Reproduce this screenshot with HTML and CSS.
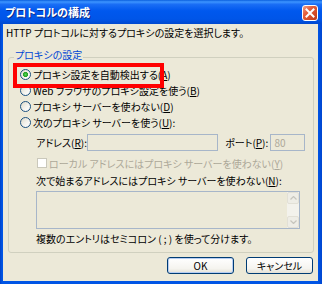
FILE: index.html
```html
<!DOCTYPE html>
<html lang="ja">
<head>
<meta charset="utf-8">
<title>プロトコルの構成</title>
<link rel="stylesheet" href="styles.css">
</head>
<body>
<div class="window">
  <div class="titlebar">
    <span class="title">プロトコルの構成</span>
    <span class="close"><svg width="10" height="10" viewBox="0 0 10 10"><path d="M1.5 1.5 L8.5 8.5 M8.5 1.5 L1.5 8.5" stroke="#fff" stroke-width="2" stroke-linecap="square"/></svg></span>
  </div>
  <div class="client">
    <p class="intro">HTTP プロトコルに対するプロキシの設定を選択します。</p>
    <fieldset class="group">
      <legend>プロキシの設定</legend>
      <div class="opt first"><span class="radio on"></span><span>プロキシ設定を自動検出する(<u>A</u>)</span></div>
      <div class="opt"><span class="radio"></span><span>Web ブラウザのプロキシ設定を使う(<u>B</u>)</span></div>
      <div class="opt"><span class="radio"></span><span>プロキシ サーバーを使わない(<u>D</u>)</span></div>
      <div class="opt"><span class="radio"></span><span>次のプロキシ サーバーを使う(<u>U</u>):</span></div>
      <div class="sub">
        <div class="addr">
          <span class="addr-label">アドレス(<u>R</u>):</span>
          <span class="field addr-input"></span>
          <span class="port-label">ポート(<u>P</u>):</span>
          <span class="field port">80</span>
        </div>
        <div class="chk"><span class="box"></span><span>ローカル アドレスにはプロキシ サーバーを使わない(<u>Y</u>)</span></div>
        <div class="lbl">次で始まるアドレスにはプロキシ サーバーを使わない(<u>N</u>):</div>
        <div class="area">
          <div class="sb">
            <span class="sbtn"><svg width="7" height="4" viewBox="0 0 7 4"><path d="M0.5 3.5 L3.5 0.5 L6.5 3.5" fill="none" stroke="#c6c5bd" stroke-width="1.2"/></svg></span>
            <span class="sbtn"><svg width="7" height="4" viewBox="0 0 7 4"><path d="M0.5 0.5 L3.5 3.5 L6.5 0.5" fill="none" stroke="#c6c5bd" stroke-width="1.2"/></svg></span>
          </div>
        </div>
        <div class="note">複数のエントリはセミコロン ( ; ) を使って分けます。</div>
      </div>
    </fieldset>
    <div class="buttons">
      <button class="btn ok">OK</button>
      <button class="btn">キャンセル</button>
    </div>
  </div>
  <div class="mark"></div>
</div>
</body>
</html>
```

FILE: styles.css
```css
* { box-sizing: border-box; }
html, body { margin: 0; padding: 0; }
body {
  width: 322px;
  height: 284px;
  overflow: hidden;
  font-family: "Noto Sans CJK JP", "Noto Sans", sans-serif;
  font-size: 10px;
  font-feature-settings: "palt";
  color: #000;
}
u { text-decoration: underline; text-underline-offset: 1px; }
.window {
  position: relative;
  width: 322px;
  height: 284px;
  display: flex;
  flex-direction: column;
  background: linear-gradient(to right, #0041c8 0, #0055e5 2px, #0055e5 318px, #0046d0 322px);
}
.titlebar {
  height: 24px;
  flex: none;
  display: flex;
  align-items: center;
  justify-content: space-between;
  padding: 0 4px 0 5px;
  background: linear-gradient(to bottom, #0a5fde 0%, #3d95ff 8%, #1a6ef5 18%, #0058ee 45%, #0055e8 80%, #0049cf 100%);
}
.title {
  color: #fff;
  font-weight: bold;
  font-size: 11px;
  line-height: 14px;
  text-shadow: 1px 1px 0 #0a2a8a;
}
.close {
  width: 16px;
  height: 16px;
  border: 1px solid #fff;
  border-radius: 3px;
  background: linear-gradient(135deg, #f0a08a 0%, #e4603e 35%, #d24a26 70%, #b83a1c 100%);
  display: flex;
  align-items: center;
  justify-content: center;
  margin-top: 2px;
}
.client {
  flex: 1;
  margin: 0 4px 3px 3px;
  background: #ece9d8;
  display: flex;
  flex-direction: column;
}
.intro {
  margin: 3px 0 0 3px;
  line-height: 12px;
  height: 12px;
  white-space: nowrap;
}
.group {
  margin: 10px 4px 0 5px;
  padding: 2px 8px 7px 11px;
  border: 1px solid #d0d0bf;
  border-radius: 3px;
  min-width: 0;
}
.group legend {
  padding: 0 1px 4px;
  margin-left: -6px;
  line-height: 12px;
  color: #0046d5;
}
.opt {
  display: flex;
  align-items: center;
  height: 16px;
  white-space: nowrap;
}
.opt.first { height: 15px; }
.radio {
  flex: none;
  width: 11px;
  height: 11px;
  margin-right: 2px;
  border-radius: 50%;
  border: 1px solid #1c5180;
  background: linear-gradient(135deg, #dcd9c8 0%, #f4f3ee 55%, #ffffff 100%);
}
.radio.on {
  background:
    radial-gradient(circle at 50% 50%, #55d655 0, #21a121 2.2px, rgba(33,161,33,0) 2.9px),
    linear-gradient(135deg, #dcd9c8 0%, #f4f3ee 55%, #ffffff 100%);
}
.sub { margin-left: 16px; }
.addr {
  display: flex;
  align-items: center;
  height: 17px;
  margin-top: 4px;
  white-space: nowrap;
}
.addr-label { width: 52px; }
.field {
  height: 17px;
  border: 1px solid #a7b6c9;
  background: #ece9d8;
}
.addr-input { width: 133px; }
.port-label { margin-left: 7px; width: 46px; }
.port {
  width: 35px;
  color: #aca899;
  padding-left: 3px;
  line-height: 15px;
}
.chk {
  display: flex;
  align-items: center;
  height: 12px;
  margin-top: 6px;
  color: #aca899;
  white-space: nowrap;
}
.box {
  flex: none;
  width: 10px;
  height: 10px;
  margin: 0 2px 0 1px;
  border: 1px solid #cac8bb;
  background: #fff;
}
.lbl {
  height: 12px;
  line-height: 12px;
  margin-top: 6px;
  white-space: nowrap;
}
.area {
  width: 264px;
  height: 38px;
  margin-top: 4px;
  border: 1px solid #a7b6c9;
  background: #ece9d8;
  display: flex;
  justify-content: flex-end;
}
.sb {
  width: 12px;
  display: flex;
  flex-direction: column;
  justify-content: space-between;
  background: #f3f2ec;
}
.sbtn {
  height: 12px;
  display: flex;
  align-items: center;
  justify-content: center;
  background: #eeede6;
  border: 1px solid #e2e0d6;
  border-radius: 2px;
}
.note {
  height: 12px;
  line-height: 12px;
  margin-top: 4px;
  white-space: nowrap;
}
.buttons {
  display: flex;
  justify-content: flex-end;
  gap: 12px;
  margin: 4px 5px 0 0;
}
.btn {
  width: 67px;
  height: 17px;
  padding: 0;
  border: 1px solid #003c74;
  border-radius: 3px;
  background: linear-gradient(to bottom, #ffffff 0%, #f5f4ef 70%, #e3e0d6 100%);
  font: inherit;
  font-feature-settings: "palt";
  color: #000;
  line-height: 13px;
}
.btn.ok {
  box-shadow: inset 0 0 0 1px #b6cdf2;
}
.mark {
  position: absolute;
  left: 13px;
  top: 63px;
  width: 151px;
  height: 25px;
  border: 4px solid #ff0000;
}
```
